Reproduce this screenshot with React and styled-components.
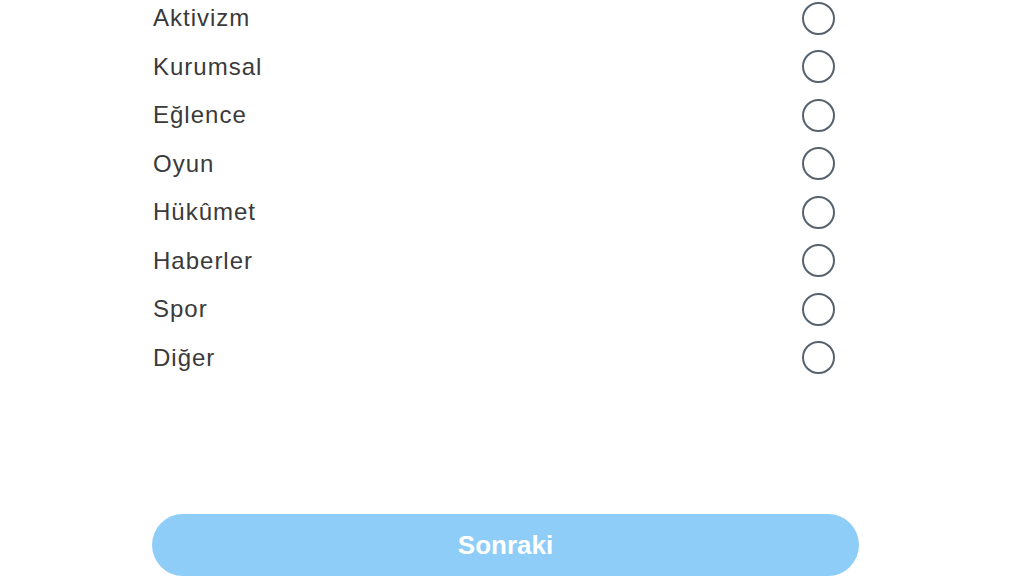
import React from 'react'
import styled, { createGlobalStyle } from 'styled-components'

const Global = createGlobalStyle`
  body {
    margin: 0;
    background: #fff;
    font-family: "Liberation Sans", Arial, sans-serif;
    overflow: hidden;
  }
`

const Page = styled.div`
  width: 707px;
  margin: -6px 0 0 152px;
  display: flex;
  flex-direction: column;
`

const List = styled.div`
  display: flex;
  flex-direction: column;
`

const Row = styled.label`
  height: 48.5px;
  display: flex;
  align-items: center;
  justify-content: space-between;
  padding: 0 24px 0 1px;
`

const Label = styled.span`
  font-size: 24px;
  color: #3a3a3a;
  letter-spacing: 1px;
`

const Radio = styled.span`
  width: 29px;
  height: 29px;
  border-radius: 50%;
  border: 2.5px solid #56636f;
`

const Next = styled.button`
  margin-top: 132px;
  height: 62px;
  border: none;
  border-radius: 31px;
  background: #8ecdf8;
  color: #fff;
  font-family: "Liberation Sans", Arial, sans-serif;
  font-weight: bold;
  font-size: 26px;
  cursor: pointer;
`

const items = ['Aktivizm', 'Kurumsal', 'Eğlence', 'Oyun', 'Hükûmet', 'Haberler', 'Spor', 'Diğer']

export default function App() {
  return (
    <>
      <Global />
      <Page>
        <List>
          {items.map((t) => (
            <Row key={t}>
              <Label>{t}</Label>
              <Radio />
            </Row>
          ))}
        </List>
        <Next>Sonraki</Next>
      </Page>
    </>
  )
}
